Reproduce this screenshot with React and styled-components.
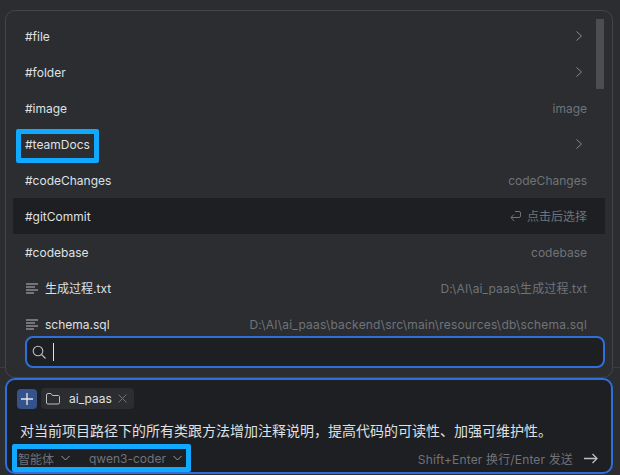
import React from 'react';
import styled, { createGlobalStyle } from 'styled-components';

const GlobalStyle = createGlobalStyle`
  html, body {
    margin: 0;
    height: 100%;
    overflow: hidden;
    background-color: #2b2d30;
  }
  body {
    font-family: "Inter", "Noto Sans CJK SC", sans-serif;
    font-size: 12px;
    color: #dfe1e5;
  }
  * {
    box-sizing: border-box;
  }
`;

const Page = styled.div`
  position: relative;
  width: 620px;
  height: 475px;
  padding: 10px 7px 0 5px;
  overflow: hidden;
  &::before {
    content: '';
    position: absolute;
    left: 0;
    right: 0;
    top: 367px;
    height: 1px;
    background-color: #393b40;
  }
`;

const Panel = styled.section`
  position: relative;
  height: 368px;
  padding: 7px 7px 0 7px;
  background-color: #2b2d30;
  border: 1px solid #43454a;
  border-radius: 10px;
`;

const List = styled.div`
  height: 318px;
  overflow: hidden;
`;

const Row = styled.div`
  display: flex;
  align-items: center;
  justify-content: space-between;
  height: 36px;
  padding: 0 18px 0 12px;
  line-height: 20px;
  background-color: ${(p) => (p.$active ? '#1e1f22' : 'transparent')};
`;

const Label = styled.span`
  display: flex;
  align-items: center;
  gap: 7px;
  padding-top: 1px;
  color: #dfe1e5;
  white-space: nowrap;
`;

const Hint = styled.span`
  display: flex;
  align-items: center;
  gap: 6px;
  padding-top: 1px;
  color: #6f737a;
  letter-spacing: ${(p) => p.$spacing || 0}px;
  white-space: nowrap;
`;

const Highlight = styled.span`
  position: relative;
  display: block;
  &::after {
    content: '';
    position: absolute;
    left: ${(p) => p.$left}px;
    right: ${(p) => p.$right}px;
    top: ${(p) => p.$top}px;
    bottom: ${(p) => p.$bottom}px;
    border: 5px solid #10a9ff;
    border-radius: 2px;
    pointer-events: none;
  }
`;

const Chevron = styled.svg`
  width: 6px;
  height: 10px;
  margin-right: 5px;
  fill: none;
  stroke: #868a91;
  stroke-width: 1;
`;

const Scrollbar = styled.div`
  position: absolute;
  top: 8px;
  right: 8px;
  width: 8px;
  height: 70px;
  background-color: #4c4d51;
`;

const Search = styled.div`
  display: flex;
  align-items: center;
  gap: 7px;
  height: 32px;
  margin: 0 0 0 12px;
  padding: 0 0 0 5px;
  background-color: #1e1f22;
  border: 2px solid #2f6fdc;
  border-radius: 8px;
`;

const Caret = styled.span`
  width: 1px;
  height: 18px;
  background-color: #dfe1e5;
`;

const Composer = styled.section`
  height: 96px;
  padding: 8px 10px 0 10px;
  background-color: #1e1f22;
  border: 2px solid #2f6fdc;
  border-radius: 10px;
`;

const ChipRow = styled.div`
  display: flex;
  align-items: center;
  gap: 4px;
`;

const AddButton = styled.button`
  display: flex;
  align-items: center;
  justify-content: center;
  width: 20px;
  height: 20px;
  padding: 0;
  background-color: #35538a;
  border: none;
  border-radius: 4px;
`;

const Chip = styled.div`
  display: flex;
  align-items: center;
  width: 93px;
  height: 21px;
  padding: 0 0 0 5px;
  background-color: #2b2d30;
  border-radius: 4px;
`;

const ChipName = styled.span`
  margin: 0 6px 0 9px;
  color: #dfe1e5;
`;

const Prompt = styled.p`
  margin: 11px 0 0 3px;
  font-size: 14px;
  line-height: 22px;
  color: #dfe1e5;
  white-space: nowrap;
`;

const Footer = styled.div`
  display: flex;
  align-items: center;
  justify-content: space-between;
  height: 20px;
  margin: 6px 3px 0 1px;
`;

const Selects = styled.span`
  display: flex;
  align-items: center;
  height: 20px;
  color: #6f737a;
`;

const Select = styled.span`
  display: flex;
  align-items: center;
  gap: 7px;
  margin-right: ${(p) => p.$gap || 0}px;
`;

const Send = styled.span`
  display: flex;
  align-items: center;
  gap: 11px;
  color: #6f737a;
  letter-spacing: 0.15px;
`;

const rows = [
  { name: '#file', more: true },
  { name: '#folder', more: true },
  { name: '#image', hint: 'image' },
  { name: '#teamDocs', more: true, mark: true },
  { name: '#codeChanges', hint: 'codeChanges' },
  { name: '#gitCommit', active: true },
  { name: '#codebase', hint: 'codebase' },
  { name: '生成过程.txt', hint: 'D:\\AI\\ai_paas\\生成过程.txt', file: true, spacing: 0.1 },
  { name: 'schema.sql', hint: 'D:\\AI\\ai_paas\\backend\\src\\main\\resources\\db\\schema.sql', file: true, spacing: 0.2 },
];

function FileIcon() {
  return (
    <svg width="13" height="11" viewBox="0 0 13 11" fill="none" stroke="#bcbec4" strokeWidth="1">
      <path d="M1 1h12M1 4h9M1 7h12M1 10h8" />
    </svg>
  );
}

function ReturnIcon() {
  return (
    <svg width="11" height="12" viewBox="0 0 11 12" fill="none" stroke="#6f737a" strokeWidth="1">
      <path d="M5 .5h4a1.5 1.5 0 0 1 1.5 1.5v3a1.5 1.5 0 0 1-1.5 1.5H1M4 3.5l-3 3 3 3.5" />
    </svg>
  );
}

function DownIcon() {
  return (
    <svg width="9" height="6" viewBox="0 0 9 6" fill="none" stroke="#9a9da3" strokeWidth="1">
      <path d="M.5 1l4 4 4-4" />
    </svg>
  );
}

function RowItem({ item }) {
  const label = item.mark ? (
    <Highlight $left={-9} $right={-9} $top={-6} $bottom={-8}>{item.name}</Highlight>
  ) : item.name;

  return (
    <Row $active={item.active}>
      <Label>
        {item.file && <FileIcon />}
        {label}
      </Label>
      {item.more && (
        <Chevron viewBox="0 0 6 10">
          <path d="M.5 .5l5 4.5-5 4.5" />
        </Chevron>
      )}
      {item.hint && <Hint $spacing={item.spacing}>{item.hint}</Hint>}
      {item.active && (
        <Hint>
          <ReturnIcon />
          点击后选择
        </Hint>
      )}
    </Row>
  );
}

export default function App() {
  return (
    <Page>
      <GlobalStyle />
      <Panel>
        <List>
          {rows.map((item) => (
            <RowItem key={item.name} item={item} />
          ))}
        </List>
        <Scrollbar />
        <Search>
          <svg width="14" height="14" viewBox="0 0 14 14" fill="none" stroke="#bcbec4" strokeWidth="1.1">
            <circle cx="6" cy="6" r="4.8" />
            <path d="M9.5 9.5l4 4" />
          </svg>
          <Caret />
        </Search>
      </Panel>
      <Composer>
        <ChipRow>
          <AddButton>
            <svg width="12" height="12" viewBox="0 0 12 12" stroke="#e6e8ec" strokeWidth="1.3">
              <path d="M6 0v12M0 6h12" />
            </svg>
          </AddButton>
          <Chip>
            <svg width="14" height="12" viewBox="0 0 14 12" fill="none" stroke="#bcbec4" strokeWidth="1">
              <path d="M.5 2a1.5 1.5 0 0 1 1.5-1.5h3l1.5 2h6a1.5 1.5 0 0 1 1 1v6a1.5 1.5 0 0 1-1.5 1.5H2A1.5 1.5 0 0 1 .5 10z" />
            </svg>
            <ChipName>ai_paas</ChipName>
            <svg width="9" height="9" viewBox="0 0 9 9" stroke="#6f737a" strokeWidth="1">
              <path d="M.5.5l8 8M8.5.5l-8 8" />
            </svg>
          </Chip>
        </ChipRow>
        <Prompt>对当前项目路径下的所有类跟方法增加注释说明，提高代码的可读性、加强可维护性。</Prompt>
        <Footer>
          <Highlight $left={-6} $right={-9} $top={-4} $bottom={-4}>
            <Selects>
              <Select $gap={19}>智能体 <DownIcon /></Select>
              <Select>qwen3-coder <DownIcon /></Select>
            </Selects>
          </Highlight>
          <Send>
            Shift+Enter 换行/Enter 发送
            <svg width="14" height="11" viewBox="0 0 14 11" fill="none" stroke="#bcbec4" strokeWidth="1.3">
              <path d="M0 5.5h13M8.5 1l4.5 4.5L8.5 10" />
            </svg>
          </Send>
        </Footer>
      </Composer>
    </Page>
  );
}
